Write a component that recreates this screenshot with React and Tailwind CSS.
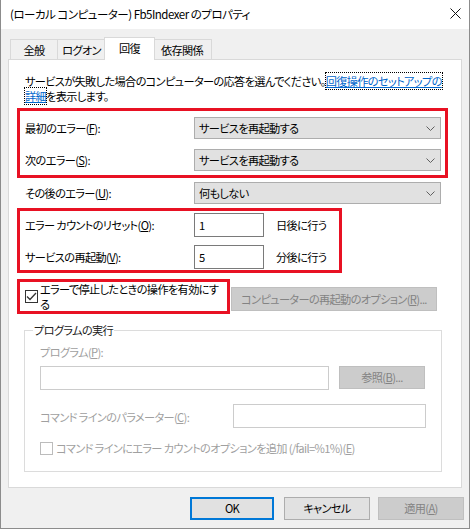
import React from "react";

const Mn = ({ k }) => <span className="underline">{k}</span>;

const Chevron = () => (
  <svg width="9" height="5" viewBox="0 0 9 5" className="mr-[5px]">
    <path d="M0.5 0.5 L4.5 4.5 L8.5 0.5" fill="none" stroke="#606060" strokeWidth="1" />
  </svg>
);

const Combo = ({ text }) => (
  <div className="flex items-center justify-between w-[247px] h-[22px] bg-[#e1e1e1] border border-[#adadad] pl-[4px]">
    <span>{text}</span>
    <Chevron />
  </div>
);

const Check = ({ checked, disabled }) => (
  <div
    className={`w-[13px] h-[13px] shrink-0 border bg-white flex items-center justify-center ${
      disabled ? "border-[#bcbcbc]" : "border-[#333333]"
    }`}
  >
    {checked && (
      <svg width="11" height="9" viewBox="0 0 11 9">
        <path d="M1 4.5 L4 7.5 L10 1" fill="none" stroke="#333333" strokeWidth="1.3" />
      </svg>
    )}
  </div>
);

export default function App() {
  return (
    <div className="w-[470px] h-[529px] bg-[#f0f0f0] border-x border-b border-[#8c8c8c] text-[11.2px] tracking-[-0.65px] leading-[15px] text-black font-['Noto_Sans_CJK_JP',sans-serif] [font-feature-settings:'palt'] whitespace-nowrap">
      {/* title bar */}
      <div className="h-[29px] bg-white flex items-center justify-between pl-[9px] pr-[8px]">
        <span className="text-[11.5px] tracking-[-0.5px]">(ローカル コンピューター) Fb5Indexer のプロパティ</span>
        <svg width="11" height="11" viewBox="0 0 11 11" className="mb-[3px]">
          <path d="M0.5 0.5 L10.5 10.5 M10.5 0.5 L0.5 10.5" stroke="#111" strokeWidth="1" />
        </svg>
      </div>

      {/* tabs */}
      <div className="h-[30px] flex items-end pl-[9px]">
        <div className="w-[48px] h-[20px] border-l border-t border-r border-[#d9d9d9] flex items-center justify-center pt-[1px]">全般</div>
        <div className="w-[48px] h-[20px] border-t border-r border-[#d9d9d9] flex items-center justify-center pt-[1px]">ログオン</div>
        <div className="relative z-10 w-[51px] h-[23px] mx-[-2px] mb-[-1px] bg-white border-l border-t border-r border-[#d9d9d9] flex items-start justify-center pt-[3px]">回復</div>
        <div className="w-[59px] h-[20px] border-t border-r border-[#d9d9d9] flex items-center justify-center pt-[1px]">依存関係</div>
      </div>

      {/* panel */}
      <div className="ml-[7px] w-[454px] h-[429px] bg-white border border-[#d9d9d9] pt-[14px]">
        <p className="pl-[16px]">
          サービスが失敗した場合のコンピューターの応答を選んでください。
          <span className="text-[#0066cc] underline outline-1 outline-dotted outline-black">回復操作のセットアップの</span>
          <br />
          <span className="text-[#0066cc] underline outline-1 outline-dotted outline-black">詳細</span>
          を表示します。
        </p>

        <div className="mt-[4px] ml-[8px] w-[431px] border-[3px] border-[#e81123] pt-[6px] pb-[4px] pl-[5px] flex flex-col gap-[10px]">
          <div className="flex items-center">
            <span className="w-[169px]">最初のエラー(<Mn k="F" />):</span>
            <Combo text="サービスを再起動する" />
          </div>
          <div className="flex items-center">
            <span className="w-[169px]">次のエラー(<Mn k="S" />):</span>
            <Combo text="サービスを再起動する" />
          </div>
        </div>

        <div className="mt-[4px] pl-[16px] flex items-center">
          <span className="w-[169px]">その後のエラー(<Mn k="U" />):</span>
          <Combo text="何もしない" />
        </div>

        <div className="mt-[4px] ml-[8px] w-[325px] border-[3px] border-[#e81123] pt-[2px] pb-[1px] pl-[5px] flex flex-col gap-[8px]">
          <div className="flex items-center">
            <span className="w-[169px]">エラー カウントのリセット(<Mn k="O" />):</span>
            <div className="w-[70px] h-[24px] border border-[#7a7a7a] pl-[4px] flex items-center">1</div>
            <span className="ml-[12px]">日後に行う</span>
          </div>
          <div className="flex items-center">
            <span className="w-[169px]">サービスの再起動(<Mn k="V" />):</span>
            <div className="w-[70px] h-[24px] border border-[#7a7a7a] pl-[4px] flex items-center">5</div>
            <span className="ml-[12px]">分後に行う</span>
          </div>
        </div>

        <div className="mt-[6px] ml-[8px] flex items-start">
          <div className="w-[213px] h-[35px] border-[3px] border-[#e81123] pl-[5px] flex items-start">
            <div className="mt-[8px]">
              <Check checked />
            </div>
            <span className="ml-[2px] leading-[15px]">
              エラーで停止したときの操作を有効にす
              <br />る
            </span>
          </div>
          <div className="ml-[1px] mt-[8px] w-[206px] h-[24px] bg-[#cccccc] border border-[#bfbfbf] text-[#838383] flex items-center justify-center">
            コンピューターの再起動のオプション(<Mn k="R" />)...
          </div>
        </div>

        {/* group box */}
        <div className="mt-[16px] ml-[15px] w-[418px] h-[142px] border border-[#dcdcdc] pl-[15px]">
          <div className="mt-[-8px] ml-[-7px] px-[1px] bg-white w-fit text-[#222]">プログラムの実行</div>
          <div className="mt-[7px] text-[#a0a0a0]">プログラム(<Mn k="P" />):</div>
          <div className="mt-[6px] flex items-start">
            <div className="w-[289px] h-[24px] border border-[#cccccc]" />
            <div className="ml-[10px] w-[86px] h-[23px] bg-[#cccccc] border border-[#bfbfbf] text-[#838383] flex items-center justify-center">
              参照(<Mn k="B" />)...
            </div>
          </div>
          <div className="mt-[14px] flex items-center">
            <span className="w-[193px] text-[#a0a0a0] pt-[3px]">コマンド ラインのパラメーター(<Mn k="C" />):</span>
            <div className="w-[193px] h-[24px] border border-[#cccccc]" />
          </div>
          <div className="mt-[13px] flex items-center text-[#a0a0a0]">
            <Check disabled />
            <span className="ml-[3px]">コマンド ラインにエラー カウントのオプションを追加 (/fail=%1%)(<Mn k="E" />)</span>
          </div>
        </div>
      </div>

      {/* bottom buttons */}
      <div className="mt-[9px] flex justify-end pr-[5px]">
        <div className="w-[84px] h-[23px] bg-[#e1e1e1] border-2 border-[#0078d7] flex items-center justify-center">OK</div>
        <div className="ml-[10px] w-[86px] h-[23px] bg-[#e1e1e1] border border-[#adadad] flex items-center justify-center">キャンセル</div>
        <div className="ml-[8px] w-[86px] h-[23px] bg-[#cccccc] border border-[#bfbfbf] text-[#838383] flex items-center justify-center">
          適用(<Mn k="A" />)
        </div>
      </div>
    </div>
  );
}
